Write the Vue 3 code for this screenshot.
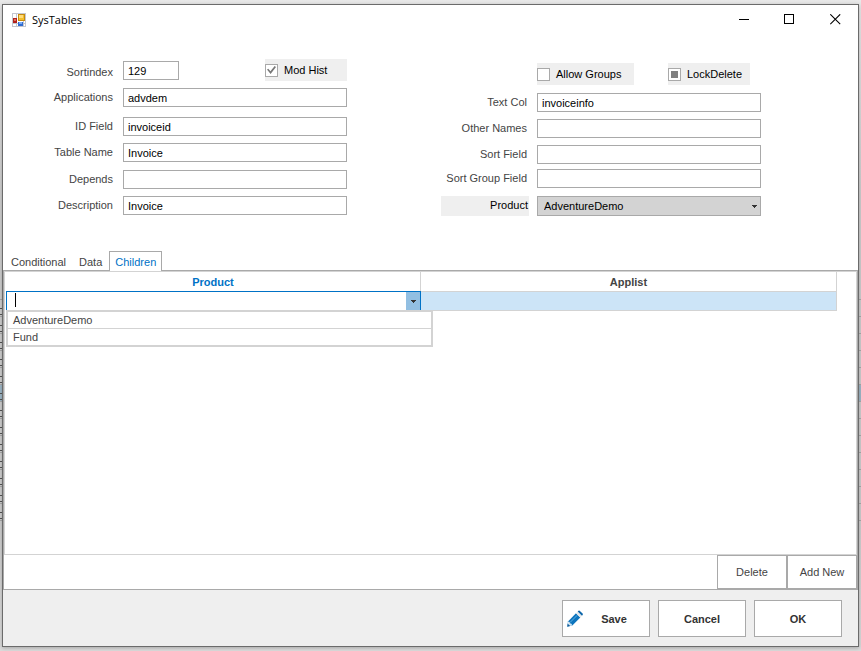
<script setup>
import { ref } from 'vue'

const form = ref({
  sortindex: '129',
  applications: 'advdem',
  idField: 'invoiceid',
  tableName: 'Invoice',
  depends: '',
  description: 'Invoice',
  textCol: 'invoiceinfo',
  otherNames: '',
  sortField: '',
  sortGroupField: '',
  product: 'AdventureDemo',
  modHist: true,
  allowGroups: false
})

const leftFields = [
  { key: 'applications', label: 'Applications' },
  { key: 'idField', label: 'ID Field' },
  { key: 'tableName', label: 'Table Name' },
  { key: 'depends', label: 'Depends' },
  { key: 'description', label: 'Description' }
]
const rightFields = [
  { key: 'textCol', label: 'Text Col' },
  { key: 'otherNames', label: 'Other Names' },
  { key: 'sortField', label: 'Sort Field' },
  { key: 'sortGroupField', label: 'Sort Group Field' }
]

const tabs = ['Conditional', 'Data', 'Children']
const activeTab = ref('Children')
const products = ['AdventureDemo', 'Fund']
const rowProduct = ref('')
const listOpen = ref(true)

const vIndeterminate = { mounted: (el) => { el.indeterminate = true } }

function pick(name) {
  rowProduct.value = name
  listOpen.value = false
}
</script>

<template>
  <div class="desktop">
    <ul class="behind" aria-hidden="true">
      <li v-for="i in 13" :key="i" :class="{ marked: i === 6 }"></li>
    </ul>

    <main class="window">
      <header class="titlebar">
        <svg class="app-icon" width="14" height="14" viewBox="0 0 14 14" shape-rendering="crispEdges" aria-hidden="true">
          <rect x="0.5" y="0.5" width="13" height="13" fill="#fff" stroke="#c3c6ce" />
          <path d="M0 10.5H14M4.500 0V14M11.500 7V14" stroke="#c3c6ce" fill="none" />
          <rect x="1" y="5" width="4" height="5" fill="#b3201a" />
          <rect x="2" y="6" width="2" height="2" fill="#e0705c" />
          <rect x="6" y="1" width="7" height="7" fill="#c58a10" />
          <rect x="7" y="2" width="5" height="5" fill="#f5bf2c" />
          <rect x="7" y="2" width="4" height="3" fill="#ffdc7a" />
          <rect x="6" y="9" width="5" height="4" fill="#2f6bd0" />
          <rect x="7" y="9" width="3" height="2" fill="#79aaf5" />
        </svg>
        <h1>SysTables</h1>
        <div class="window-buttons">
          <button type="button" aria-label="Minimize">
            <svg width="11" height="11" viewBox="0 0 11 11" shape-rendering="crispEdges"><path d="M1 5.500H11" stroke="#000" /></svg>
          </button>
          <button type="button" aria-label="Maximize">
            <svg width="11" height="11" viewBox="0 0 11 11" shape-rendering="crispEdges"><rect x="0.500" y="0.500" width="9" height="9" fill="none" stroke="#000" /></svg>
          </button>
          <button type="button" aria-label="Close">
            <svg width="11" height="11" viewBox="0 0 11 11"><path d="M0.300 0.300L10.200 10.200M10.200 0.300L0.300 10.200" stroke="#000" stroke-width="1.100" /></svg>
          </button>
        </div>
      </header>

      <form class="form" @submit.prevent>
        <div class="group left">
          <label class="low" for="sortindex">Sortindex</label>
          <div class="pair">
            <input id="sortindex" v-model="form.sortindex" class="box short" type="text" />
            <label class="check"><input v-model="form.modHist" type="checkbox" />Mod Hist</label>
          </div>
          <template v-for="f in leftFields" :key="f.key">
            <label :for="f.key">{{ f.label }}</label>
            <input :id="f.key" v-model="form[f.key]" class="box" type="text" />
          </template>
        </div>

        <div class="group right">
          <div class="checks">
            <label class="check"><input v-model="form.allowGroups" type="checkbox" />Allow Groups</label>
            <label class="check"><input v-indeterminate type="checkbox" />LockDelete</label>
          </div>
          <template v-for="f in rightFields" :key="f.key">
            <label :for="f.key">{{ f.label }}</label>
            <input :id="f.key" v-model="form[f.key]" class="box" type="text" />
          </template>
          <label class="shaded" for="product">Product</label>
          <div class="select">
            <select id="product" v-model="form.product">
              <option v-for="p in products" :key="p">{{ p }}</option>
            </select>
            <svg width="5" height="3" viewBox="0 0 5 3" shape-rendering="crispEdges" aria-hidden="true"><path d="M0 0H5V1H4V2H3V3H2V2H1V1H0Z" fill="#333" /></svg>
          </div>
        </div>
      </form>

      <nav class="tabs" role="tablist">
        <button
          v-for="t in tabs"
          :key="t"
          type="button"
          role="tab"
          :aria-selected="activeTab === t"
          :class="{ active: activeTab === t }"
          @click="activeTab = t"
        >{{ t }}</button>
      </nav>

      <section class="panel">
        <div class="grid-area">
          <table>
            <colgroup><col class="product-col" /><col /></colgroup>
            <thead>
              <tr><th class="current" scope="col">Product</th><th scope="col">Applist</th></tr>
            </thead>
            <tbody>
              <tr>
                <td class="editing">
                  <div class="combo">
                    <span class="caret"></span>
                    <input v-model="rowProduct" type="text" role="combobox" aria-label="Product" :aria-expanded="listOpen" />
                    <button type="button" aria-label="Open list" @click="listOpen = !listOpen">
                      <svg width="5" height="3" viewBox="0 0 5 3" shape-rendering="crispEdges"><path d="M0 0H5V1H4V2H3V3H2V2H1V1H0Z" fill="#333" /></svg>
                    </button>
                  </div>
                  <ul v-if="listOpen" class="list" role="listbox">
                    <li v-for="p in products" :key="p" role="option" @click="pick(p)">{{ p }}</li>
                  </ul>
                </td>
                <td></td>
              </tr>
            </tbody>
          </table>
        </div>
        <div class="row-actions">
          <button type="button">Delete</button>
          <button type="button">Add New</button>
        </div>
      </section>

      <footer class="footer">
        <button type="button" class="save">
          <svg width="16" height="17" viewBox="0 0 16 17" aria-hidden="true">
            <path d="M0.300 16.500L1 11.500L9 3.300L13.300 7.500L5.300 15.500Z" fill="#0d74bd" />
            <path d="M3 12.500L10.200 5.300" stroke="#5fb0e4" stroke-width="1" />
            <path d="M1 11.500L0.300 16.500L5.300 15.500L4.500 13.800L2.900 13.300L2.600 11.900Z" fill="#d5e6f3" />
            <path d="M0.200 16.800L0.700 13.700L3.300 16.100Z" fill="#0b5c9b" />
            <path d="M9 3.300L10.700 1.600L15 5.800L13.300 7.500Z" fill="#e3e6e9" />
            <path d="M10.700 1.600L11.500 0.800Q12.200 0.200 12.900 0.900L15.600 3.600Q16.100 4.300 15.600 5.100L15 5.800Z" fill="#0b65aa" />
          </svg>
          <span>Save</span>
        </button>
        <button type="button">Cancel</button>
        <button type="button">OK</button>
      </footer>
    </main>
  </div>
</template>

<style>
body {
  margin: 0;
  background: #d6d6d6;
}
</style>

<style scoped>
* {
  box-sizing: border-box;
}

.desktop {
  position: relative;
  display: flex;
  min-height: 100vh;
  padding: 4px 2px;
  background: linear-gradient(#e9e9e9, #cfcfcf 30%, #cfcfcf 80%, #dcdcdc);
  font: 11px/13px "Liberation Sans", Arial, sans-serif;
  color: #444;
  overflow: hidden;
}

.behind {
  position: absolute;
  top: 299px;
  left: 0;
  right: 0;
  margin: 0;
  padding: 0;
  border-bottom: 1px solid #a9a9a9;
  list-style: none;
}

.behind li {
  height: 17px;
  padding-top: 8px;
  border-top: 1px solid #a9a9a9;
}

.behind li::before {
  content: "";
  display: block;
  width: 2px;
  height: 5px;
  border: solid #555;
  border-width: 1px 1px 1px 0;
}

.behind li.marked {
  background: #9fb8c8;
}

.window {
  position: relative;
  flex: 1;
  display: flex;
  flex-direction: column;
  border: 1px solid #6b6b6b;
  background: #fff;
  box-shadow: 0 1px 4px rgba(0, 0, 0, 0.25);
}

.titlebar {
  display: flex;
  align-items: center;
  height: 29px;
  padding-left: 9px;
}

.titlebar h1 {
  margin: 0 0 0 6px;
  font: 11px/16px "Open Sans", "Noto Sans", sans-serif;
  color: #000;
}

.window-buttons {
  display: flex;
  margin-left: auto;
}

.window-buttons button {
  display: grid;
  place-items: center;
  width: 46px;
  height: 29px;
  padding: 0;
  border: 0;
  background: none;
}

.form {
  display: grid;
  grid-template-columns: 1fr 1fr;
  gap: 94px;
  padding: 25px 97px 0 24px;
}

.group {
  display: grid;
  grid-template-columns: 88px 1fr;
  column-gap: 8px;
  align-items: start;
  align-content: start;
}

.left {
  grid-template-rows: 29px 29px 26px 27px 26px 19px;
}

.right {
  grid-template-rows: 34px 26px 26px 24px 27px 20px;
}

.group > label {
  padding: 3px 2px;
  text-align: right;
  white-space: nowrap;
}

.group > .low {
  padding-top: 7px;
}

.group > .shaded {
  height: 20px;
  padding-right: 1px;
  background: #efefef;
  color: #000;
}

.pair {
  display: flex;
  justify-content: space-between;
}

.checks {
  grid-column: 2;
  display: grid;
  grid-template-columns: 97px 82px;
  gap: 34px;
  padding-top: 4px;
}

.box {
  width: 100%;
  height: 19px;
  padding: 1px 4px 0;
  border: 1px solid #a9a9a9;
  background: #fff;
  color: #000;
  font: inherit;
  outline: none;
}

.short {
  width: 56px;
  margin-top: 2px;
}

.check {
  display: flex;
  align-items: center;
  gap: 6px;
  height: 22px;
  background: #efefef;
  color: #000;
  white-space: nowrap;
}

.pair .check {
  width: 82px;
}

.check input {
  appearance: none;
  display: grid;
  place-items: center;
  width: 13px;
  height: 13px;
  margin: 0;
  border: 1px solid #a9a9a9;
  background: #fff;
}

.check input:checked::before {
  content: "";
  width: 9px;
  height: 8px;
  background: #777;
  clip-path: polygon(0 45%, 15% 35%, 38% 65%, 85% 0, 100% 12%, 40% 100%);
}

.check input:indeterminate::before {
  content: "";
  width: 7px;
  height: 7px;
  background: #808080;
}

.select {
  display: grid;
  align-items: center;
}

.select select,
.select svg {
  grid-area: 1 / 1;
}

.select select {
  appearance: none;
  width: 100%;
  height: 20px;
  padding: 0 6px;
  border: 1px solid #a9a9a9;
  border-radius: 0;
  background: #d3d3d3;
  color: #000;
  font: inherit;
}

.select svg {
  justify-self: end;
  margin-right: 4px;
  pointer-events: none;
}

.tabs {
  display: flex;
  align-items: flex-end;
  gap: 1px;
  margin-top: 35px;
  padding-left: 2px;
}

.tabs button {
  height: 19px;
  padding: 3px 5px 0;
  border: 1px solid transparent;
  border-bottom: 0;
  background: #fff;
  color: #444;
  font: inherit;
}

.tabs button.active {
  position: relative;
  height: 20px;
  margin-bottom: -1px;
  padding-top: 2px;
  border-color: #a9a9a9;
  color: #0072c6;
}

.panel {
  flex: 1;
  display: flex;
  flex-direction: column;
  border: 1px solid #a9a9a9;
}

.grid-area {
  flex: 1;
  border: 1px solid #d3d3d3;
  padding: 0 19px 0 1px;
}

table {
  width: 100%;
  table-layout: fixed;
  border-spacing: 0;
}

.product-col {
  width: 415px;
}

th {
  height: 19px;
  padding: 2px 0 0;
  border-right: 1px solid #d3d3d3;
  font-weight: bold;
}

th.current {
  color: #0072c6;
}

td {
  height: 20px;
  padding: 0;
  border: 1px solid #d3d3d3;
  border-left: 0;
  background: #cce4f7;
}

td.editing {
  position: relative;
  border-color: #0072c6;
  border-left: 1px solid #0072c6;
  border-bottom: 0;
  background: #fff;
}

.combo {
  display: flex;
  align-items: center;
  height: 19px;
}

.caret {
  align-self: flex-start;
  width: 1px;
  height: 14px;
  margin: 1px 0 0 8px;
  background: #000;
}

.combo input {
  flex: 1;
  min-width: 0;
  padding: 0;
  border: 0;
  background: none;
  color: #000;
  font: inherit;
  outline: none;
}

.combo button {
  display: grid;
  place-items: center;
  width: 14px;
  height: 19px;
  padding: 0;
  border: 0;
  background: #92bfe2;
}

.list {
  position: absolute;
  top: 18px;
  left: -1px;
  right: -13px;
  margin: 0;
  padding: 0;
  border: 2px solid #d3d3d3;
  background: #fff;
  list-style: none;
}

.list li {
  height: 16px;
  padding: 0 5px;
  line-height: 17px;
}

.list li + li {
  height: 17px;
  border-top: 1px solid #d3d3d3;
}

.row-actions {
  display: flex;
  justify-content: flex-end;
}

.row-actions button {
  width: 70px;
  height: 34px;
  padding: 0;
  border: 1px solid #a9a9a9;
  background: #fff;
  color: #444;
  font: inherit;
}

.footer {
  display: flex;
  justify-content: flex-end;
  gap: 8px;
  padding: 10px 16px 9px;
  background: #efefef;
}

.footer button {
  width: 88px;
  height: 37px;
  padding: 2px 0 0;
  border: 1px solid #a9a9a9;
  background: #fff;
  color: #333;
  font: inherit;
  font-weight: bold;
}

.footer .save {
  display: flex;
  align-items: center;
  padding-left: 4px;
}

.save svg {
  margin-bottom: 2px;
}

.save span {
  flex: 1;
  padding-right: 4px;
}
</style>
